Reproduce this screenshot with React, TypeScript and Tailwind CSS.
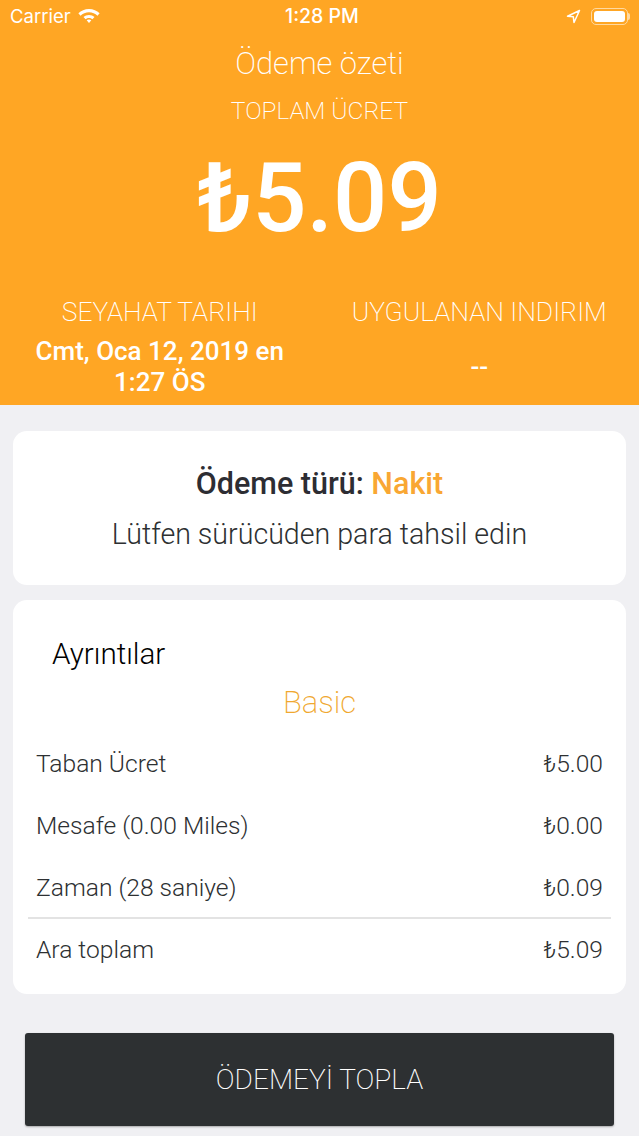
function Row({ label, value, className }: { label: string; value: string; className: string }) {
  return (
    <div className={`flex items-center justify-between pl-[8px] pr-[8px] text-[24.6px] font-light leading-[30px] text-[#2d3032] ${className}`}>
      <span>{label}</span>
      <span>{value}</span>
    </div>
  );
}

export default function App() {
  return (
    <div className="flex h-[1136px] w-[639px] flex-col overflow-hidden bg-[#f0f0f3] font-['Roboto',sans-serif]">
      <header className="flex h-[405px] shrink-0 flex-col bg-[#ffa624] text-white">
        <div className="flex h-[32px] items-center justify-between pl-[10px] pr-[9px] pt-[1px] font-['Inter',sans-serif] text-[18.500px]">
          <div className="flex w-[200px] items-center gap-[6px]">
            <span className="font-normal">Carrier</span>
            <svg width="24" height="17" viewBox="0 0 22 16" fill="white">
              <path d="M11 1C7 1 3.600 2.600 1 5l2 2.200C5.100 5.300 7.900 4.100 11 4.100s5.900 1.200 8 3.100L21 5c-2.600-2.400-6-4-10-4z" />
              <path d="M11 6.500c-2 0-3.900.8-5.200 2l2 2.200c.9-.8 2-1.300 3.200-1.300s2.300.5 3.200 1.300l2-2.200c-1.300-1.200-3.200-2-5.200-2z" />
              <path d="M8.800 11.600 11 14l2.200-2.400c-.6-.5-1.400-.8-2.200-.8s-1.600.3-2.200.8z" />
            </svg>
          </div>
          <span className="ml-[4px] text-[19.500px] font-medium">1:28 PM</span>
          <div className="flex w-[200px] items-center justify-end gap-[10px]">
            <svg width="15" height="15" viewBox="0 0 15 15" fill="none" stroke="white" strokeWidth="1.500" strokeLinejoin="round">
              <path d="M13.500 1.500 1.500 7.200l5.800.6.700 5.700z" />
            </svg>
            <div className="flex items-center">
              <div className="h-[17px] w-[37px] rounded-[5px] border border-[#ffd9a0] p-[2px]">
                <div className="h-full w-full rounded-[3px] bg-white" />
              </div>
              <div className="h-[7px] w-[2px] rounded-r-[2px] bg-[#ffd9a0]" />
            </div>
          </div>
        </div>

        <h1 className="mt-[14px] text-center text-[31px] leading-[35px] font-extralight">Ödeme özeti</h1>
        <p className="mt-[15px] text-center text-[24.500px] leading-[30px] font-extralight">TOPLAM ÜCRET</p>
        <p className="mt-[19px] text-center text-[95.500px] leading-[106px] font-medium">₺5.09</p>

        <div className="mt-[46px] grid grid-cols-2">
          <div className="flex flex-col items-center">
            <p className="text-[26.400px] leading-[30px] font-extralight">SEYAHAT TARIHI</p>
            <p className="mt-[9px] w-[270px] text-center text-[26px] leading-[30.500px] font-medium">
              Cmt, Oca 12, 2019 en 1:27 ÖS
            </p>
          </div>
          <div className="flex flex-col items-center">
            <p className="text-[26.400px] leading-[30px] font-extralight">UYGULANAN INDIRIM</p>
            <p className="mt-[25px] text-[26px] leading-[30px] font-medium">--</p>
          </div>
        </div>
      </header>

      <main className="flex flex-col px-[13px]">
        <section className="mt-[26px] flex h-[154px] flex-col items-center rounded-[14px] bg-white pt-[36px]">
          <p className="text-[30.500px] leading-[33px] font-medium text-[#2d2d33]">
            Ödeme türü: <span className="text-[#f9a733]">Nakit</span>
          </p>
          <p className="mt-[18px] text-[28.600px] leading-[32px] font-light text-[#2d3032]">Lütfen sürücüden para tahsil edin</p>
        </section>

        <section className="mt-[15px] flex h-[394px] flex-col rounded-[14px] bg-white px-[15px]">
          <h2 className="mt-[38px] pl-[24px] text-[29.600px] leading-[33px] font-light text-black">Ayrıntılar</h2>
          <p className="mt-[14px] text-center text-[31px] leading-[35px] font-extralight text-[#f0a830]">Basic</p>
          <Row className="mt-[29px]" label="Taban Ücret" value="₺5.00" />
          <Row className="mt-[32px]" label="Mesafe (0.00 Miles)" value="₺0.00" />
          <Row className="mt-[31.500px]" label="Zaman (28 saniye)" value="₺0.09" />
          <div className="mt-[14.500px] h-[2px] bg-[#e3e3e3]" />
          <Row className="mt-[16px]" label="Ara toplam" value="₺5.09" />
        </section>

        <button className="mx-[12px] mt-[39px] h-[93px] rounded-[3px] bg-[#2d3032] text-[28px] font-extralight text-white shadow-[0_1px_2px_rgba(0,0,0,0.3)]">
          ÖDEMEYİ TOPLA
        </button>
      </main>
    </div>
  );
}
